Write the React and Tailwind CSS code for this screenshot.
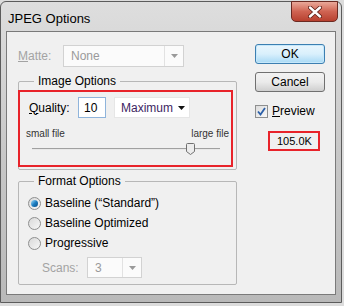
function Arrow({ color = '#9a9a9a' }) {
  return (
    <svg width="7" height="4" viewBox="0 0 7 4">
      <path d="M0 0h7L3.5 4z" fill={color} />
    </svg>
  )
}

function Combo({ value, w, split }) {
  return (
    <div className={`h-full flex items-center bg-[#fbfbfb] border border-[#d2d2d2] ${w}`}>
      <span className="pl-[7px] flex-1 text-[#9a9a9a]">{value}</span>
      {split && <div className="w-px self-stretch bg-[#e2e2e2]" />}
      <div className="w-[18px] flex justify-center">
        <Arrow />
      </div>
    </div>
  )
}

function Radio({ checked, label }) {
  return (
    <div className="h-[20px] flex items-center gap-[4px]">
      <div className="w-[13px] h-[13px] rounded-full border border-[#8e8f8f] bg-gradient-to-br from-[#d9d9d9] to-[#f7f7f7] flex items-center justify-center">
        {checked && (
          <div className="w-[7px] h-[7px] rounded-full bg-gradient-to-br from-[#9de2fb] via-[#1c7fc2] to-[#0d4d86]" />
        )}
      </div>
      <span>{label}</span>
    </div>
  )
}

export default function App() {
  return (
    <div className="w-[344px] h-[306px] bg-[#dcdcdc] overflow-hidden font-['Liberation_Sans',Arial,sans-serif] text-[12px] leading-[14px] text-black">
      <div className="w-[342px] h-[302px] mt-[1px] rounded-t-[6px] border border-[#5c5c5c] bg-gradient-to-b from-[#dedede] via-[#c8c8c8] to-[#b9b9b9] flex flex-col px-[5px] pb-[7px]">
        {/* title bar */}
        <div className="h-[29px] flex items-start justify-between">
          <span className="mt-[9px] ml-[2px] text-[13px] leading-[15px]">JPEG Options</span>
          <div className="-mt-[1px] -mr-[2px] w-[47px] h-[21px] rounded-b-[5px] border border-[#6b2a22] bg-gradient-to-b from-[#e9a899] via-[#cf6352] to-[#b7402f] flex items-center justify-center">
            <svg width="14" height="12" viewBox="0 0 14 12">
              <path d="M2 1.5l10 9M12 1.5l-10 9" stroke="#5a1a12" strokeWidth="4" strokeLinecap="round" />
              <path d="M2 1.5l10 9M12 1.5l-10 9" stroke="#fff" strokeWidth="2.4" strokeLinecap="round" />
            </svg>
          </div>
        </div>

        {/* client area */}
        <div className="flex-1 border border-[#7a7a7a] bg-[#f0f0f0] flex">
          {/* left column */}
          <div className="w-[230px] pl-[11px] pt-[13px] flex flex-col">
            <div className="h-[22px] flex items-center">
              <span className="w-[45px] text-[#a3a3a3]">
                <span className="underline">M</span>atte:
              </span>
              <Combo value="None" w="w-[121px]" split />
            </div>

            <fieldset className="mt-[7px] w-[219px] border border-[#b7b7b7] rounded-[2px] pb-[2px]">
              <legend className="ml-[15px] px-[4px]">Image Options</legend>
              <div className="mt-[2px] -ml-[1px] w-[215px] h-[77px] border-2 border-[#e8232a] flex flex-col">
                <div className="mt-[5px] h-[21px] flex items-center pl-[9px]">
                  <span className="w-[49px]">
                    <span className="underline">Q</span>uality:
                  </span>
                  <div className="w-[28px] h-full border border-[#8fb4db] bg-white flex items-center pl-[5px]">10</div>
                  <div className="ml-[8px] w-[76px] h-full bg-white border border-[#e6e6e6] flex items-center">
                    <span className="pl-[6px] flex-1 text-[#3d1f63]">Maximum</span>
                    <div className="w-[16px] flex justify-center">
                      <Arrow color="#111" />
                    </div>
                  </div>
                </div>
                <div className="mt-[10px] pl-[6px] pr-[2px] flex justify-between text-[10px] leading-[12px] text-[#333]">
                  <span>small file</span>
                  <span>large file</span>
                </div>
                <div className="mt-[3px] ml-[12px] w-[188px] h-[12px] flex items-center">
                  <div className="w-[154px] h-[2px] border-t border-[#a0a0a0] border-b border-b-[#e8e8e8]" />
                  <svg width="9" height="12" viewBox="0 0 9 12">
                    <path d="M1.5.5h6a1 1 0 0 1 1 1v7l-4 3-4-3v-7a1 1 0 0 1 1-1z" fill="#ececec" stroke="#707070" />
                  </svg>
                  <div className="flex-1 h-[2px] border-t border-[#a0a0a0] border-b border-b-[#e8e8e8]" />
                </div>
              </div>
            </fieldset>

            <fieldset className="mt-[4px] w-[219px] border border-[#b7b7b7] rounded-[2px] pb-[6px]">
              <legend className="ml-[15px] px-[4px]">Format Options</legend>
              <div className="mt-[5px] pl-[9px] flex flex-col">
                <Radio checked label={'Baseline (\u201cStandard\u201d)'} />
                <Radio label="Baseline Optimized" />
                <Radio label="Progressive" />
              </div>
              <div className="mt-[4px] ml-[23px] h-[21px] flex items-center">
                <span className="w-[45px] text-[#a3a3a3]">Scans:</span>
                <Combo value="3" w="w-[55px]" split />
              </div>
            </fieldset>
          </div>

          {/* right column */}
          <div className="pl-[18px] pt-[12px] flex flex-col">
            <div className="w-[70px] h-[20px] rounded-[3px] border border-[#3c7fb1] bg-gradient-to-b from-[#eaf6fd] via-[#d9f0fc] to-[#a7d9f5] flex items-center justify-center shadow-[inset_0_0_0_1px_#c6e8fb]">
              OK
            </div>
            <div className="mt-[8px] w-[70px] h-[20px] rounded-[3px] border border-[#707070] bg-gradient-to-b from-[#f2f2f2] via-[#ebebeb] to-[#cfcfcf] flex items-center justify-center">
              Cancel
            </div>
            <div className="mt-[12px] flex items-center gap-[4px]">
              <div className="w-[13px] h-[13px] border border-[#8e8f8f] bg-gradient-to-br from-[#dcdcdc] to-[#f8f8f8] flex items-center justify-center">
                <svg width="9" height="9" viewBox="0 0 9 9">
                  <path d="M1 4.5l2.5 3L8 1" stroke="#2b5fa8" strokeWidth="1.8" fill="none" />
                </svg>
              </div>
              <span>
                <span className="underline">P</span>review
              </span>
            </div>
            <div className="mt-[13px] ml-[13px] w-[52px] h-[20px] border-2 border-[#e8232a] flex items-center pl-[7px] text-[11px]">
              105.0K
            </div>
          </div>
        </div>
      </div>
    </div>
  )
}
